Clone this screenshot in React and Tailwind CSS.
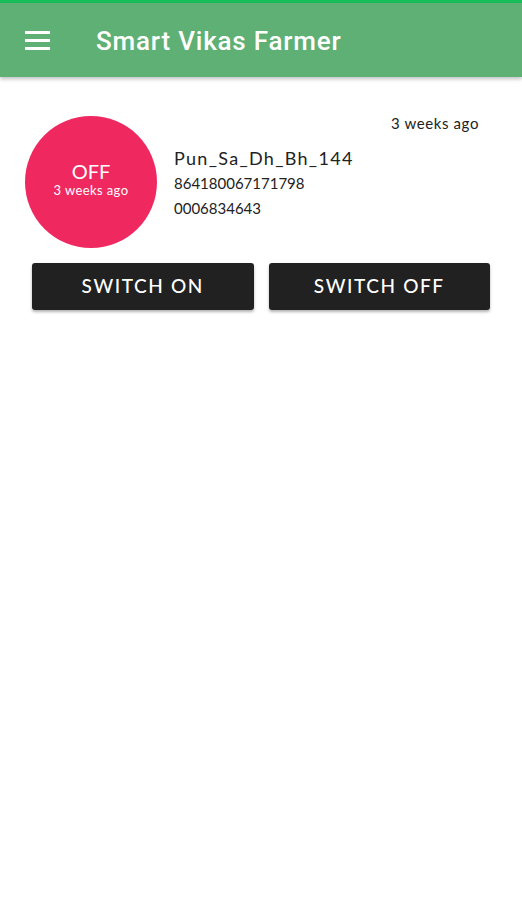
export default function App() {
  return (
    <div className="w-[522px] h-[900px] bg-white font-['Lato','Open_Sans',sans-serif] overflow-hidden">
      {/* status strip */}
      <div className="h-[3px] bg-[#17c05a]" />

      {/* toolbar */}
      <header className="h-[74px] bg-[#5eb075] flex items-center shadow-[0_2px_4px_rgba(0,0,0,0.25)] relative z-10">
        <div className="ml-[25px] w-[25px] flex flex-col gap-[5px]">
          <span className="block h-[3px] bg-white" />
          <span className="block h-[3px] bg-white" />
          <span className="block h-[3px] bg-white" />
        </div>
        <h1 className="ml-[46px] mt-[2px] text-white text-[26px] font-medium font-['Roboto',sans-serif] tracking-[0.8px]">
          Smart Vikas Farmer
        </h1>
      </header>

      {/* device card */}
      <section className="px-[25px] pt-[39px]">
        <div className="flex">
          <div className="w-[132px] h-[132px] rounded-full bg-[#ef2860] flex flex-col items-center justify-center text-white shrink-0 pb-[6px]">
            <span className="text-[20px] leading-[22px]">OFF</span>
            <span className="text-[13px] leading-[16px] tracking-[0.4px]">3 weeks ago</span>
          </div>
          <div className="flex-1 relative">
            <div className="absolute right-[18px] top-[-4px] text-[15px] tracking-[0.6px] text-[#222]">3 weeks ago</div>
            <div className="ml-[17px] mt-[30px] text-[#222]">
              <div className="text-[18px] leading-[24px] tracking-[1.3px]">Pun_Sa_Dh_Bh_144</div>
              <div className="text-[15px] leading-[25px] mt-[1px]">864180067171798</div>
              <div className="text-[15px] leading-[24px]">0006834643</div>
            </div>
          </div>
        </div>

        <div className="flex gap-[15px] mt-[15px] px-[7px]">
          <button className="flex-1 h-[47px] rounded-[3px] bg-[#212121] text-white text-[19px] tracking-[1.6px] font-medium shadow-[0_2px_3px_rgba(0,0,0,0.3)]">
            SWITCH ON
          </button>
          <button className="flex-1 h-[47px] rounded-[3px] bg-[#212121] text-white text-[19px] tracking-[1.6px] font-medium shadow-[0_2px_3px_rgba(0,0,0,0.3)]">
            SWITCH OFF
          </button>
        </div>
      </section>
    </div>
  );
}
